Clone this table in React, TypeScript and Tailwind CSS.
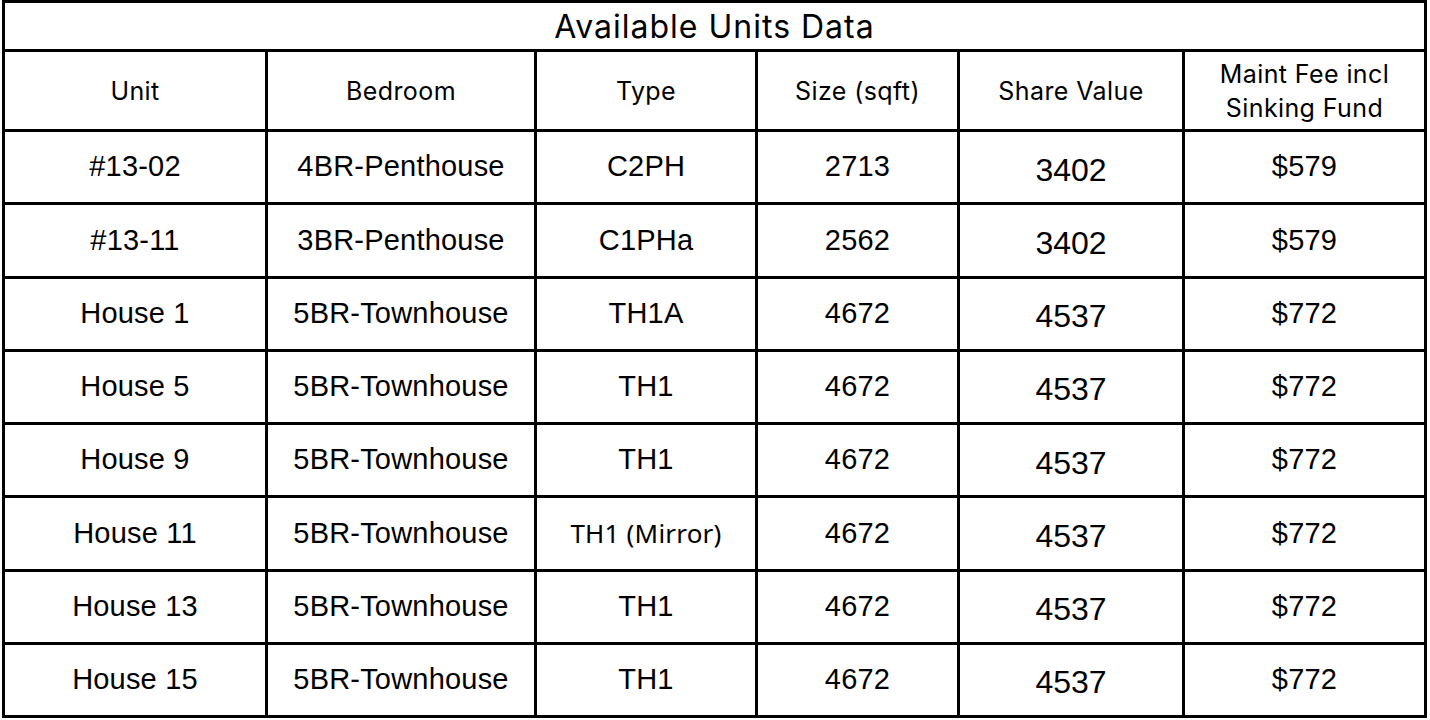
import React from 'react';

interface Unit {
  unit: string;
  bedroom: string;
  type: string;
  size: string;
  share: string;
  fee: string;
}

const units: Unit[] = [
  { unit: '#13-02', bedroom: '4BR-Penthouse', type: 'C2PH', size: '2713', share: '3402', fee: '$579' },
  { unit: '#13-11', bedroom: '3BR-Penthouse', type: 'C1PHa', size: '2562', share: '3402', fee: '$579' },
  { unit: 'House 1', bedroom: '5BR-Townhouse', type: 'TH1A', size: '4672', share: '4537', fee: '$772' },
  { unit: 'House 5', bedroom: '5BR-Townhouse', type: 'TH1', size: '4672', share: '4537', fee: '$772' },
  { unit: 'House 9', bedroom: '5BR-Townhouse', type: 'TH1', size: '4672', share: '4537', fee: '$772' },
  { unit: 'House 11', bedroom: '5BR-Townhouse', type: 'TH1 (Mirror)', size: '4672', share: '4537', fee: '$772' },
  { unit: 'House 13', bedroom: '5BR-Townhouse', type: 'TH1', size: '4672', share: '4537', fee: '$772' },
  { unit: 'House 15', bedroom: '5BR-Townhouse', type: 'TH1', size: '4672', share: '4537', fee: '$772' },
];

const headers = ['Unit', 'Bedroom', 'Type', 'Size (sqft)', 'Share Value'];

const cell = 'bg-white flex items-center justify-center text-center text-black';
const body = "font-['Liberation_Sans',Arial,sans-serif] text-[29px] tracking-[0.2px]";
const head = "font-['Inter',sans-serif] text-[25px] tracking-[0.4px]";

export default function App() {
  return (
    <div className="w-[1430px] h-[720px] bg-white">
      <div className="ml-[2px] w-[1425px] h-[718px] bg-black p-[3px] grid gap-[3px] grid-cols-[260px_266px_218px_199px_222px_239px] grid-rows-[46px_77px_repeat(8,1fr)]">
        <div className={`${cell} col-span-6 font-['Inter',sans-serif] text-[32px] tracking-[1px] pt-[2px]`}>
          Available Units Data
        </div>
        {headers.map((h) => (
          <div key={h} className={`${cell} ${head} pt-[2px]`}>
            {h}
          </div>
        ))}
        <div className={`${cell} ${head} leading-[34px]`}>
          Maint Fee incl
          <br />
          Sinking Fund
        </div>
        {units.map((u) => (
          <React.Fragment key={u.unit}>
            <div className={`${cell} ${body}`}>{u.unit}</div>
            <div className={`${cell} ${body}`}>{u.bedroom}</div>
            <div
              className={`${cell} ${
                u.type.includes('Mirror')
                  ? "font-['Noto_Sans',sans-serif] text-[26px] tracking-[0.2px]"
                  : body
              }`}
            >
              {u.type}
            </div>
            <div className={`${cell} ${body}`}>{u.size}</div>
            <div className={`${cell} font-['Liberation_Sans',Arial,sans-serif] text-[32px] pt-[5px]`}>{u.share}</div>
            <div className={`${cell} ${body}`}>{u.fee}</div>
          </React.Fragment>
        ))}
      </div>
    </div>
  );
}
